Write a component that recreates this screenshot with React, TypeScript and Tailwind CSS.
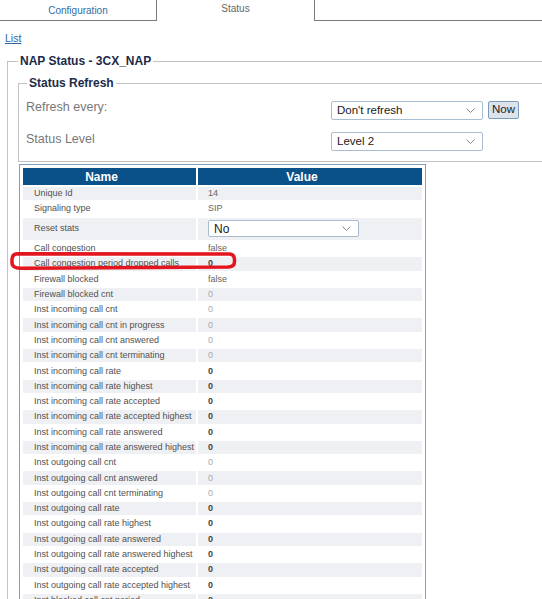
import React from 'react';

type Kind = 'n' | 'l' | 'd' | 'sel';

const rows: [string, string, Kind][] = [
  ['Unique Id', '14', 'n'],
  ['Signaling type', 'SIP', 'n'],
  ['Reset stats', 'No', 'sel'],
  ['Call congestion', 'false', 'n'],
  ['Call congestion period dropped calls', '0', 'd'],
  ['Firewall blocked', 'false', 'n'],
  ['Firewall blocked cnt', '0', 'l'],
  ['Inst incoming call cnt', '0', 'l'],
  ['Inst incoming call cnt in progress', '0', 'l'],
  ['Inst incoming call cnt answered', '0', 'l'],
  ['Inst incoming call cnt terminating', '0', 'l'],
  ['Inst incoming call rate', '0', 'd'],
  ['Inst incoming call rate highest', '0', 'd'],
  ['Inst incoming call rate accepted', '0', 'd'],
  ['Inst incoming call rate accepted highest', '0', 'd'],
  ['Inst incoming call rate answered', '0', 'd'],
  ['Inst incoming call rate answered highest', '0', 'd'],
  ['Inst outgoing call cnt', '0', 'l'],
  ['Inst outgoing call cnt answered', '0', 'l'],
  ['Inst outgoing call cnt terminating', '0', 'l'],
  ['Inst outgoing call rate', '0', 'd'],
  ['Inst outgoing call rate highest', '0', 'd'],
  ['Inst outgoing call rate answered', '0', 'd'],
  ['Inst outgoing call rate answered highest', '0', 'd'],
  ['Inst outgoing call rate accepted', '0', 'd'],
  ['Inst outgoing call rate accepted highest', '0', 'd'],
  ['Inst blocked call cnt period', '0', 'd'],
];

const Chevron = () => (
  <svg width="9" height="5" viewBox="0 0 9 5" className="shrink-0">
    <path d="M0.5 0.5 L4.5 4.5 L8.5 0.5" fill="none" stroke="#8a8a8a" strokeWidth="1" />
  </svg>
);

function FakeSelect({ label, className }: { label: string; className: string }) {
  return (
    <div
      className={`flex items-center justify-between border border-[#a9bdd2] rounded-[2px] bg-white pl-[5px] pr-[7px] text-[#1a1a1a] ${className}`}
    >
      <span className="leading-none">{label}</span>
      <Chevron />
    </div>
  );
}

export default function App() {
  return (
    <div className="relative w-[542px] h-[599px] overflow-hidden bg-white font-['Liberation_Sans',Arial,sans-serif]">
      {/* tabs */}
      <div className="flex h-[21px]">
        <div className="w-[157px] border-r border-b border-[#7a7a7a] flex items-center justify-center pt-[1px] text-[10px] text-[#2f6da5]">
          Configuration
        </div>
        <div className="w-[157px] flex justify-center pt-[3px] text-[10px] leading-[12px] text-[#666]">
          Status
        </div>
        <div className="flex-1 border-l border-b border-[#7a7a7a]" />
      </div>

      <div className="pl-[5px] pt-[11px] text-[10.5px] leading-[13px]">
        <a className="underline text-[#2a66a3]">List</a>
      </div>

      <fieldset className="mt-[8px] ml-[7px] border-l border-t border-r-0 border-b-0 border-[#c2c2c2] pl-[10px]">
        <legend className="px-[2px] text-[12px] leading-[16px] font-bold text-[#1c2b48]">
          NAP Status - 3CX_NAP
        </legend>

        <fieldset className="mt-[6px] border-l border-t border-b border-r-0 border-[#c2c2c2] pl-[7px] pb-[10px]">
          <legend className="ml-[1px] px-[2px] text-[12px] leading-[16px] font-bold text-[#1c2b48]">
            Status Refresh
          </legend>
          <div className="mt-[10px] flex items-start h-[19px]">
            <div className="w-[305px] -mt-[1px] text-[12.5px] leading-[14px] text-[#777]">Refresh every:</div>
            <FakeSelect label="Don't refresh" className="w-[152px] h-[19px] text-[11.5px]" />
            <button className="ml-[5px] w-[31px] h-[18px] bg-[#dde3ea] border border-[#7c9cbc] rounded-[2px] text-[11.5px] leading-none text-[#222]">
              Now
            </button>
          </div>
          <div className="mt-[12px] flex items-start h-[19px]">
            <div className="w-[305px] text-[12.5px] leading-[14px] text-[#777]">Status Level</div>
            <FakeSelect label="Level 2" className="w-[152px] h-[19px] text-[11.5px]" />
          </div>
        </fieldset>

        <div className="ml-[1px] mt-[2px] w-[407px] border border-[#7aa2c7] p-[3px]">
          <div className="grid grid-cols-[173px_224px] gap-[2px]">
            <div className="h-[17px] bg-[#0a5089] flex items-center justify-center pr-[16px] text-[12px] font-bold text-white">
              Name
            </div>
            <div className="h-[17px] bg-[#0a5089] flex items-center justify-center pr-[16px] text-[12px] font-bold text-white">
              Value
            </div>
            {rows.map(([name, value, kind], i) => {
              const bg = i % 2 === 0 ? 'bg-[#eff0f4]' : 'bg-white';
              const h = kind === 'sel' ? 'h-[22.4px]' : 'h-[13.3px]';
              return (
                <React.Fragment key={name}>
                  <div className={`${bg} ${h} flex items-center pl-[11px] text-[9px] leading-none text-[#505050] whitespace-nowrap`}>
                    {name}
                  </div>
                  <div className={`${bg} ${h} flex items-center pl-[10px] text-[9px] leading-none`}>
                    {kind === 'sel' ? (
                      <FakeSelect label={value} className="w-[151px] h-[17px] text-[12px] pl-[4px]" />
                    ) : kind === 'l' ? (
                      <span className="text-[#aaa]">{value}</span>
                    ) : kind === 'd' ? (
                      <span className="font-bold text-[#444]">{value}</span>
                    ) : (
                      <span className="text-[#666]">{value}</span>
                    )}
                  </div>
                </React.Fragment>
              );
            })}
          </div>
        </div>
      </fieldset>

      {/* red annotation */}
      <svg className="absolute left-[8px] top-[250px]" width="232" height="22" viewBox="0 0 232 22">
        <path
          d="M10 3.8 L221 4 Q226.5 4.2 226.5 9.5 L226.5 12 Q226.5 16.8 220 17 L13 18.2 Q4 18.4 4 12.5 L4 9.5 Q4 3.8 10 3.8 Z"
          fill="none"
          stroke="#e3161f"
          strokeWidth="3.5"
        />
      </svg>
    </div>
  );
}
